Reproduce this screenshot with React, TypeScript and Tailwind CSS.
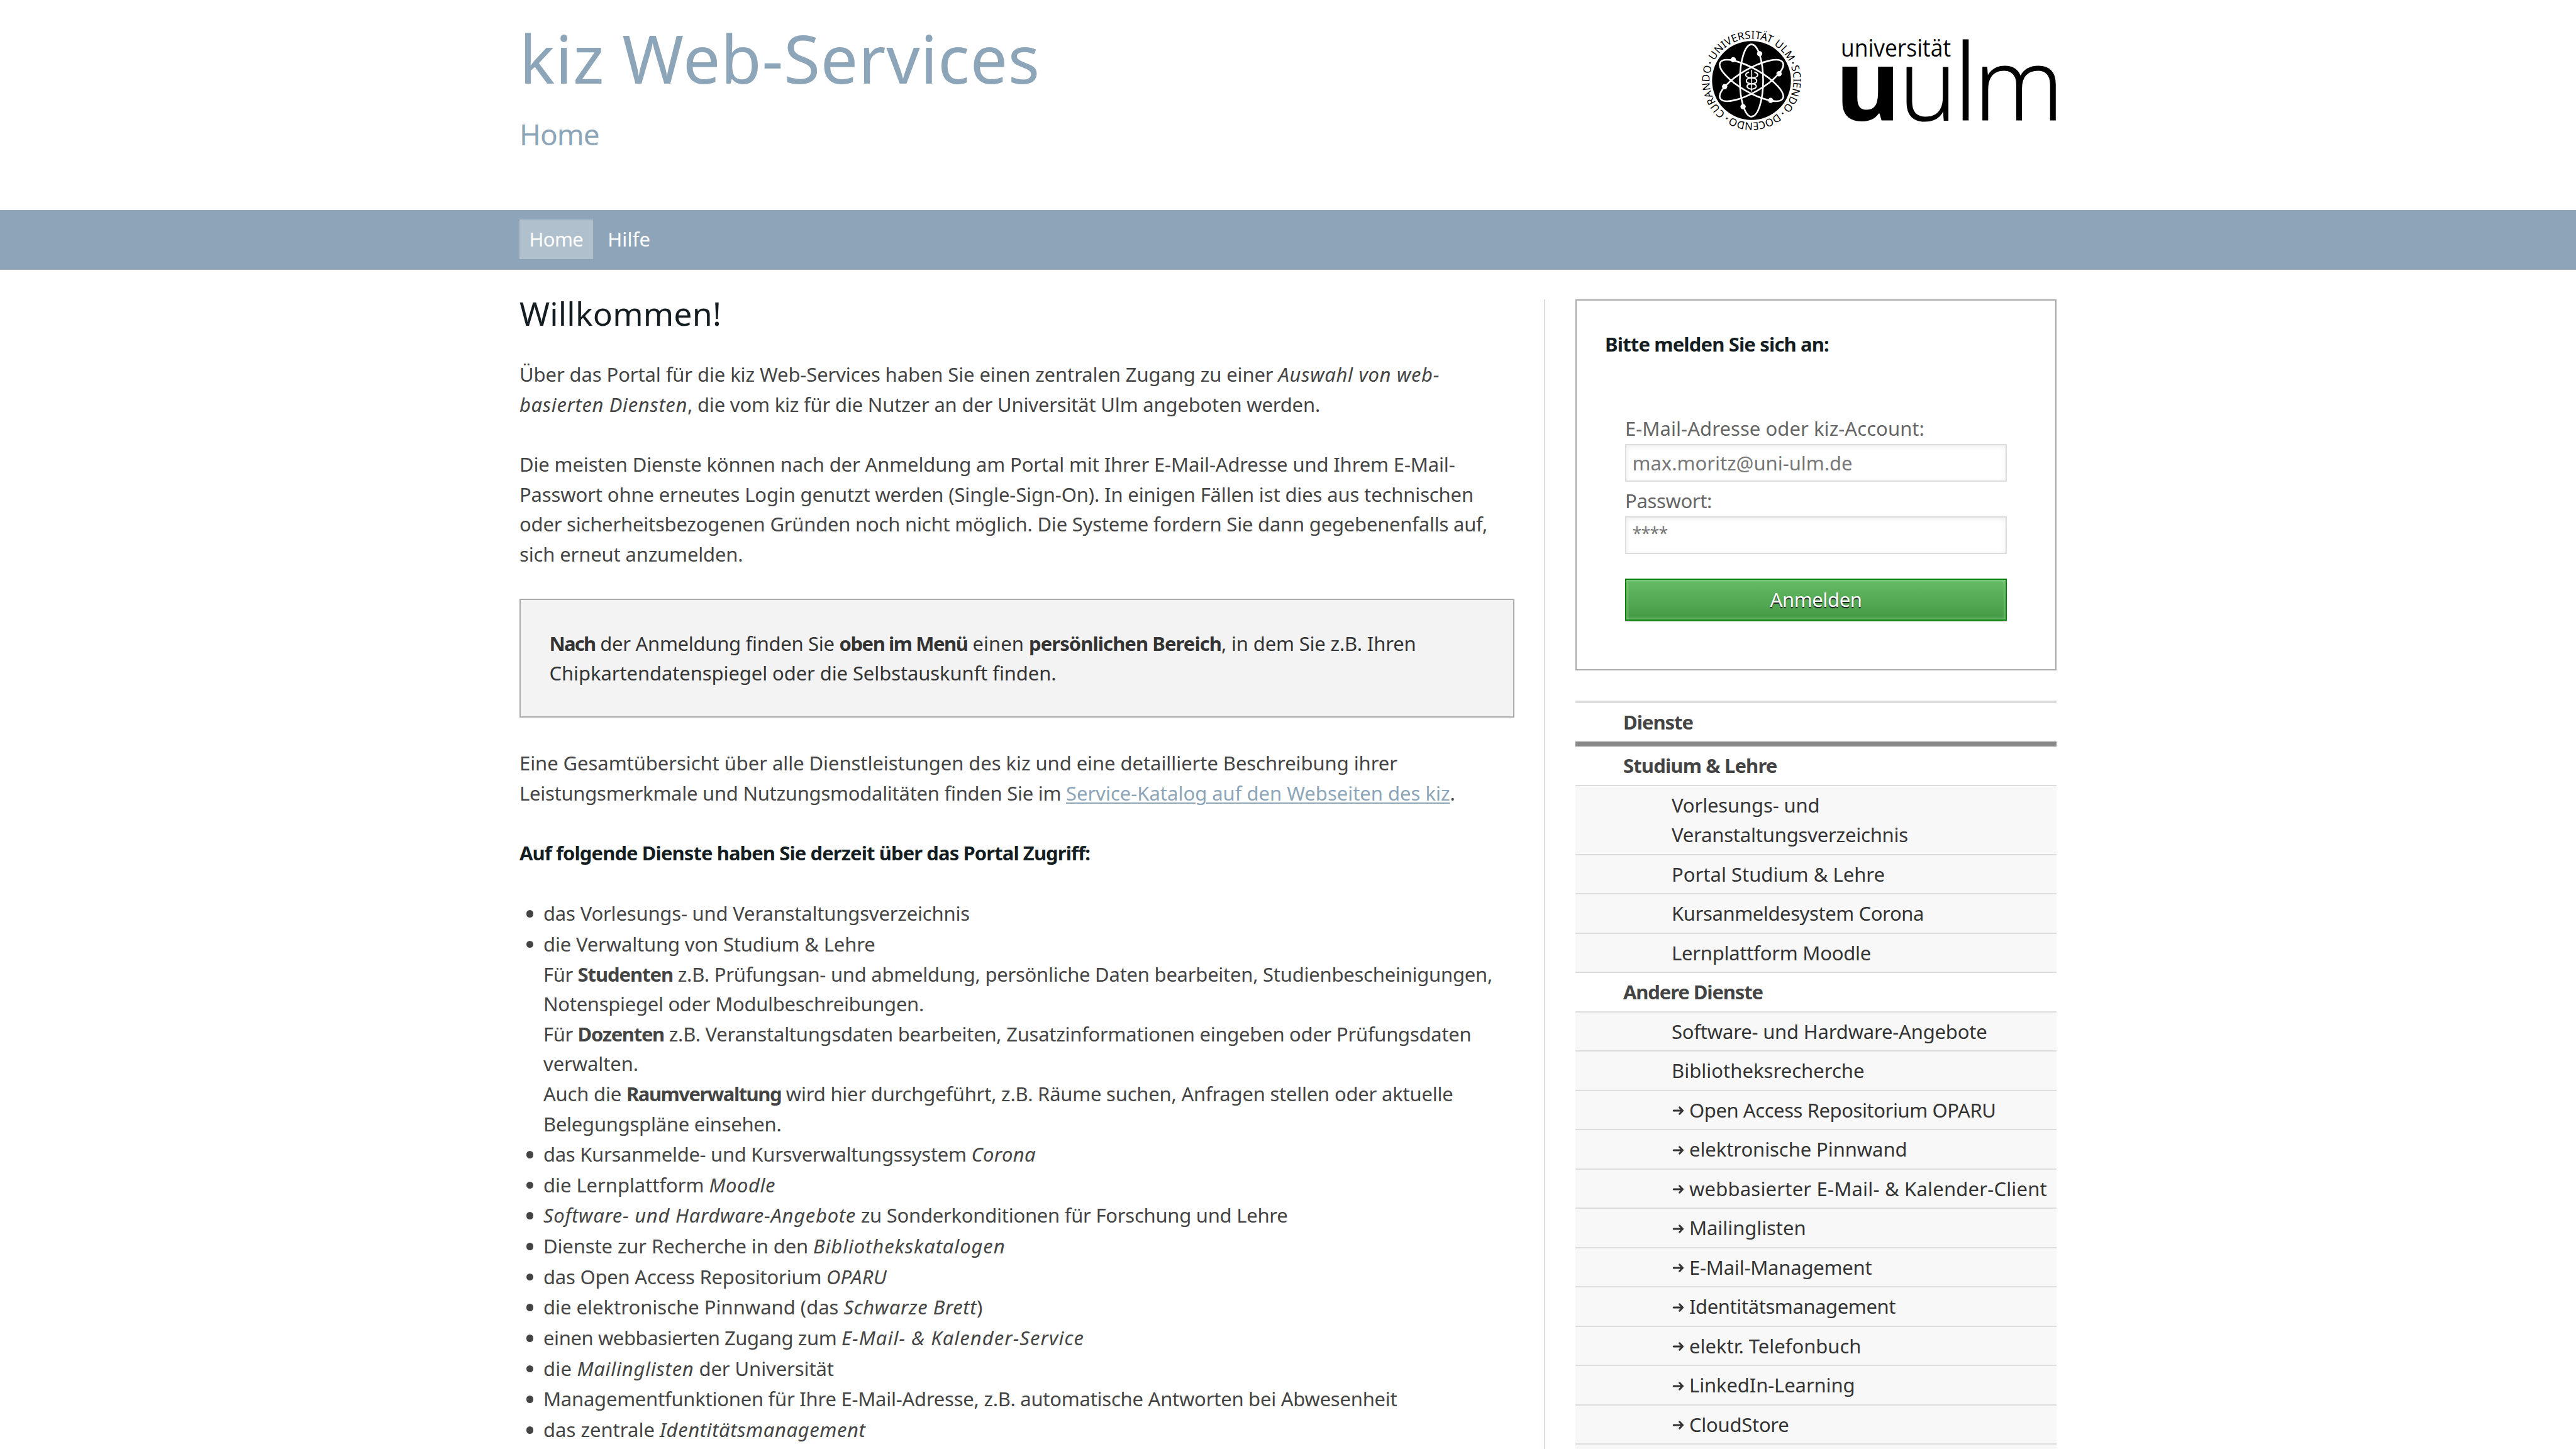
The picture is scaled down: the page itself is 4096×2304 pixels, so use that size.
import { useLayoutEffect, useRef, useState, type ReactNode } from "react";

/** Inline run of text whose tracking is set so that it spans `w` pixels. */
function Run({ w, className = "", children }: { w: number; className?: string; children: string }) {
  const ref = useRef<HTMLSpanElement>(null);
  const [tracking, setTracking] = useState(0);
  useLayoutEffect(() => {
    const el = ref.current;
    if (!el) return;
    const current = parseFloat(el.style.letterSpacing) || 0;
    const natural = el.getBoundingClientRect().width - current * children.length;
    setTracking((w - natural) / children.length);
  }, [w, children]);
  return (
    <span ref={ref} className={`inline-block whitespace-pre ${className}`} style={{ letterSpacing: `${tracking}px` }}>
      {children}
    </span>
  );
}

type Seg = [text: string, w: number, kind?: "i" | "b" | "a"];

const kinds = {
  i: "italic",
  b: "font-[660]",
  a: "text-[#8da5b8] underline decoration-[1.5px] underline-offset-[3px]",
};

function Line({ segs }: { segs: Seg[] }) {
  return (
    <div className="flex h-[47.6px] whitespace-pre leading-[50.4px]">
      {segs.map(([text, w, kind], i) => (
        <Run key={i} w={w} className={kind ? kinds[kind] : ""}>
          {text}
        </Run>
      ))}
    </div>
  );
}

const intro: Seg[][] = [
  [["Über das Portal für die kiz Web-Services haben Sie einen zentralen Zugang zu einer ", 1206.5], ["Auswahl von web-", 256.5, "i"]],
  [["basierten Diensten", 267, "i"], [", die vom kiz für die Nutzer an der Universität Ulm angeboten werden.", 1006]],
];

const details: Seg[][] = [
  [["Die meisten Dienste können nach der Anmeldung am Portal mit Ihrer E-Mail-Adresse und Ihrem E-Mail-", 1487.5]],
  [["Passwort ohne erneutes Login genutzt werden (Single-Sign-On). In einigen Fällen ist dies aus technischen", 1517]],
  [["oder sicherheitsbezogenen Gründen noch nicht möglich. Die Systeme fordern Sie dann gegebenenfalls auf,", 1539]],
  [["sich erneut anzumelden.", 355.5]],
];

const notice: Seg[][] = [
  [
    ["Nach", 73, "b"],
    [" der Anmeldung finden Sie ", 388],
    ["oben im Menü", 204, "b"],
    [" einen ", 97.5],
    ["persönlichen Bereich", 306, "b"],
    [", in dem Sie z.B. Ihren", 309.5],
  ],
  [["Chipkartendatenspiegel oder die Selbstauskunft finden.", 806]],
];

const catalog: Seg[][] = [
  [["Eine Gesamtübersicht über alle Dienstleistungen des kiz und eine detaillierte Beschreibung ihrer", 1396]],
  [
    ["Leistungsmerkmale und Nutzungsmodalitäten finden Sie im ", 869],
    ["Service-Katalog auf den Webseiten des kiz", 610.5, "a"],
    [".", 8],
  ],
];

const services: Seg[][][] = [
  [[["das Vorlesungs- und Veranstaltungsverzeichnis", 678]]],
  [
    [["die Verwaltung von Studium & Lehre", 527.5]],
    [["Für ", 54.5], ["Studenten", 151.5, "b"], [" z.B. Prüfungsan- und abmeldung, persönliche Daten bearbeiten, Studienbescheinigungen,", 1303]],
    [["Notenspiegel oder Modulbeschreibungen.", 605]],
    [["Für ", 54.5], ["Dozenten", 137.5, "b"], [" z.B. Veranstaltungsdaten bearbeiten, Zusatzinformationen eingeben oder Prüfungsdaten", 1283.5]],
    [["verwalten.", 151]],
    [["Auch die ", 132], ["Raumverwaltung", 246, "b"], [" wird hier durchgeführt, z.B. Räume suchen, Anfragen stellen oder aktuelle", 1068.5]],
    [["Belegungspläne einsehen.", 378.5]],
  ],
  [[["das Kursanmelde- und Kursverwaltungssystem ", 680.5], ["Corona", 102.5, "i"]]],
  [[["die Lernplattform ", 263.5], ["Moodle", 105.5, "i"]]],
  [[["Software- und Hardware-Angebote", 497, "i"], [" zu Sonderkonditionen für Forschung und Lehre", 686.5]]],
  [[["Dienste zur Recherche in den ", 429], ["Bibliothekskatalogen", 305.5, "i"]]],
  [[["das Open Access Repositorium ", 450], ["OPARU", 96, "i"]]],
  [[["die elektronische Pinnwand (das ", 477.5], ["Schwarze Brett", 211.5, "i"], [")", 11]]],
  [[["einen webbasierten Zugang zum ", 474], ["E-Mail- & Kalender-Service", 386, "i"]]],
  [[["die ", 53.5], ["Mailinglisten", 186, "i"], [" der Universität", 222.5]]],
  [[["Managementfunktionen für Ihre E-Mail-Adresse, z.B. automatische Antworten bei Abwesenheit", 1357.5]]],
  [[["das zentrale ", 185], ["Identitätsmanagement", 327.5, "i"]]],
];

type Entry = { lines: [string, number][]; arrow?: boolean };

const study: Entry[] = [
  { lines: [["Vorlesungs- und", 235.5], ["Veranstaltungsverzeichnis", 376]] },
  { lines: [["Portal Studium & Lehre", 339]] },
  { lines: [["Kursanmeldesystem Corona", 401]] },
  { lines: [["Lernplattform Moodle", 317]] },
];

const others: Entry[] = [
  { lines: [["Software- und Hardware-Angebote", 501.5]] },
  { lines: [["Bibliotheksrecherche", 306.5]] },
  { arrow: true, lines: [["Open Access Repositorium OPARU", 487.5]] },
  { arrow: true, lines: [["elektronische Pinnwand", 346.5]] },
  { arrow: true, lines: [["webbasierter E-Mail- & Kalender-Client", 569]] },
  { arrow: true, lines: [["Mailinglisten", 185.5]] },
  { arrow: true, lines: [["E-Mail-Management", 290.5]] },
  { arrow: true, lines: [["Identitätsmanagement", 328]] },
  { arrow: true, lines: [["elektr. Telefonbuch", 273.5]] },
  { arrow: true, lines: [["LinkedIn-Learning", 263.5]] },
  { arrow: true, lines: [["CloudStore", 158.5]] },
];

function Arrow() {
  return (
    <svg viewBox="0 0 28 20" className="mt-[16.5px] h-[20px] w-[28px] shrink-0" fill="none" stroke="#333" strokeWidth="3" strokeLinejoin="round" strokeLinecap="round">
      <path d="M3.2 10H17M12.6 4.8L17.6 10L12.6 15.2" />
    </svg>
  );
}

function MenuItem({ entry }: { entry: Entry }) {
  return (
    <li className="flex border-b-2 border-[#ddd] bg-[#f8f8f8] pt-[5px] pb-[7.92px] pl-[153px] text-[#333]">
      {entry.arrow && <Arrow />}
      <div>
        {entry.lines.map(([text, w]) => (
          <div key={text} className="flex h-[47.6px] leading-[50.8px]">
            <Run w={w}>{text}</Run>
          </div>
        ))}
      </div>
    </li>
  );
}

function MenuHeading({ w, children }: { w: number; children: string }) {
  return (
    <li className="flex h-[62.6px] border-b-2 border-[#ddd] pt-[5px] pl-[76px] font-[660] leading-[50.8px]">
      <Run w={w}>{children}</Run>
    </li>
  );
}

function Seal() {
  const ring = "M-61.4 -26.06A66.7 66.7 0 0 1 61.4 26.06A66.7 66.7 0 0 1 -61.4 -26.06A66.7 66.7 0 0 1 0 -66.7";
  const words: [string, number, number][] = [
    ["UNIVERSITÄT ULM", 5.8, 146],
    ["SCIENDO", 159.5, 72.2],
    ["DOCENDO", 242.2, 79.2],
    ["CURANDO", 331.5, 83],
  ];
  const dots = [[66, -28], [49.4, 52.3], [-39.3, 60.2], [-66, -28]];
  const electrons = [[12.9, -42.6], [-29, -33.1], [43.8, -10.7], [-42.7, 9.7], [30.5, 31.6], [-13.4, 41.6]];
  return (
    <svg viewBox="-82 -82 164 164" className="h-[164px] w-[164px] shrink-0 overflow-visible">
      <defs>
        <path id="seal-ring" d={ring} />
      </defs>
      <circle r="62.7" fill="#000" />
      <g fill="none" stroke="#fff" strokeWidth="2.6">
        <ellipse rx="18.5" ry="57.4" />
        <ellipse rx="18.5" ry="57.4" transform="rotate(60)" />
        <ellipse rx="18.5" ry="57.4" transform="rotate(-60)" />
        <path d="M0.3 -17V17.5" strokeWidth="1.6" />
        <path
          d="M-4 -13.5C-12 -11 -11 -4.5 0.3 -4.3C11 -3.5 11 4.5 0.3 5.3C-9.5 6 -9.5 12.5 0.3 14M4.6 -13.5C12.6 -11 11.6 -4.5 0.3 -4.3C-11 -3.5 -11 4.5 0.3 5.3C10 6 10 12.5 0.3 14"
          strokeWidth="2"
        />
      </g>
      <g fill="#fff">
        {electrons.map(([x, y]) => (
          <circle key={x} cx={x} cy={y} r="4.2" />
        ))}
      </g>
      {dots.map(([x, y]) => (
        <circle key={x} cx={x} cy={y} r="1.3" />
      ))}
      {words.map(([word, offset, length]) => (
        <text key={word} fontSize="16.7" className="font-['Noto_Sans',sans-serif]">
          <textPath href="#seal-ring" startOffset={offset} textLength={length}>
            {word}
          </textPath>
        </text>
      ))}
    </svg>
  );
}

function Wordmark() {
  return (
    <svg viewBox="0 0 350 164" className="h-[164px] w-[350px] shrink-0 overflow-visible font-['Open_Sans',sans-serif]">
      <text x="4" y="44" fontSize="37.5" textLength="175" lengthAdjust="spacingAndGlyphs">universität</text>
      <text x="-5.4" y="145.2" fontSize="157" fontWeight="700" textLength="105" lengthAdjust="spacingAndGlyphs">u</text>
      <g fontWeight="300" stroke="#000" strokeWidth="1.2">
        <text x="96.5" y="145.2" fontSize="158" textLength="92" lengthAdjust="spacingAndGlyphs">u</text>
        <text x="183.5" y="145.2" fontSize="168">l</text>
        <text x="215.5" y="145.2" fontSize="158" textLength="143" lengthAdjust="spacingAndGlyphs">m</text>
      </g>
    </svg>
  );
}

function Field({ label, labelW, children }: { label: string; labelW: number; children: ReactNode }) {
  return (
    <label className="block">
      <span className="flex h-[49px] leading-[49.6px] text-[#666]">
        <Run w={labelW}>{label}</Run>
      </span>
      <span className="flex h-[60px] border-2 border-[#ddd] pl-[9.5px] leading-[56px] text-[#777] shadow-[inset_0_2px_8px_#eee]">
        {children}
      </span>
    </label>
  );
}

function Lines({ rows }: { rows: Seg[][] }): ReactNode {
  return rows.map((segs, i) => <Line key={i} segs={segs} />);
}

export default function App() {
  return (
    <div className="h-[2304px] w-[4096px] overflow-hidden bg-white font-['Noto_Sans','Open_Sans',sans-serif] text-[31px] text-[#444]">
      <header className="mx-auto flex h-[333.5px] w-[2444px] justify-between text-[#8da5b8]">
        <div className="pt-[31.6px]">
          <h1 className="h-[119px] text-[105.3px] leading-[120px]">
            <Run w={828}>kiz Web-Services</Run>
          </h1>
          <p className="mt-[32px] h-[60px] text-[45.9px] leading-[60px]">
            <Run w={126.5}>Home</Run>
          </p>
        </div>
        <div className="flex w-[567.5px] pt-[45.8px] text-black">
          <Seal />
          <div className="ml-[56.5px]">
            <Wordmark />
          </div>
        </div>
      </header>

      <nav className="h-[95.2px] bg-[#8ea5b9]">
        <div className="mx-auto flex w-[2444px] gap-[8px] pt-[15.7px] leading-[63.6px] text-white">
          <a className="h-[63.2px] bg-[#b0c1cd] px-[15.5px]">
            <Run w={85.7}>Home</Run>
          </a>
          <a className="h-[63.2px] px-[15.5px]">
            <Run w={68}>Hilfe</Run>
          </a>
        </div>
      </nav>

      <div className="mx-auto flex h-[1876px] w-[2444px] justify-between">
        <main className="w-[1582px] pt-[37.5px]">
          <h2 className="h-[64px] text-[51.8px] leading-[65px] text-[#141e22]">
            <Run w={321}>Willkommen!</Run>
          </h2>
          <div className="mt-[40px]">
            <Lines rows={intro} />
          </div>
          <div className="mt-[47.6px]">
            <Lines rows={details} />
          </div>
          <div className="mt-[48.4px] h-[189.5px] border-2 border-[#aaa] bg-[#f3f3f3] pt-[44px] pl-[45.5px] text-[#333]">
            <Lines rows={notice} />
          </div>
          <div className="mt-[47.1px]">
            <Lines rows={catalog} />
          </div>
          <h3 className="mt-[47.6px] flex h-[47.6px] font-[660] leading-[50.4px] text-[#141e22]">
            <Run w={907}>Auf folgende Dienste haben Sie derzeit über das Portal Zugriff:</Run>
          </h3>
          <ul className="mt-[48.6px] flex flex-col gap-[1.07px]">
            {services.map((rows, i) => (
              <li key={i} className="flex">
                <span className="mt-[20px] ml-[10.8px] h-[11.5px] w-[11.5px] shrink-0 rounded-full bg-[#444]" />
                <div className="ml-[15.7px]">
                  <Lines rows={rows} />
                </div>
              </li>
            ))}
          </ul>
        </main>

        <aside className="mt-[47.6px] w-[815px] border-l-2 border-[#ddd] pl-[48px]">
          <section className="h-[590.2px] border-2 border-[#aaa] pt-[44.5px]">
            <h4 className="ml-[45px] flex h-[47.6px] font-[660] leading-[49.6px] text-[#141e22]">
              <Run w={356}>Bitte melden Sie sich an:</Run>
            </h4>
            <form className="ml-[77px] mt-[86.3px] w-[607px]">
              <Field label="E-Mail-Adresse oder kiz-Account:" labelW={476}>
                <Run w={350}>max.moritz@uni-ulm.de</Run>
              </Field>
              <div className="h-[6.4px]" />
              <Field label="Passwort:" labelW={138}>
                <Run w={56} className="text-[27px] leading-[50px]">****</Run>
              </Field>
              <button
                type="button"
                className="mt-[38.5px] flex h-[67.4px] w-full justify-center border-2 border-[#008000] bg-linear-to-b from-[#66bb66] to-[#449944] leading-[62px] text-white shadow-[inset_0_0_5px_#a8dca8,0_2px_0_#ddd] [text-shadow:0_2px_1px_#222]"
              >
                <Run w={146}>Anmelden</Run>
              </button>
            </form>
          </section>

          <ul className="mt-[48px] border-t-4 border-[#ddd]">
            <li className="flex h-[68.6px] border-b-8 border-[#888] pt-[5px] pl-[76px] font-[660] leading-[50.8px]">
              <Run w={111}>Dienste</Run>
            </li>
            <MenuHeading w={244.5}>Studium &amp; Lehre</MenuHeading>
            {study.map((entry) => (
              <MenuItem key={entry.lines[0][0]} entry={entry} />
            ))}
            <MenuHeading w={222}>Andere Dienste</MenuHeading>
            {others.map((entry) => (
              <MenuItem key={entry.lines[0][0]} entry={entry} />
            ))}
            <li className="h-[62.5px] bg-[#f8f8f8]" />
          </ul>
        </aside>
      </div>
    </div>
  );
}
